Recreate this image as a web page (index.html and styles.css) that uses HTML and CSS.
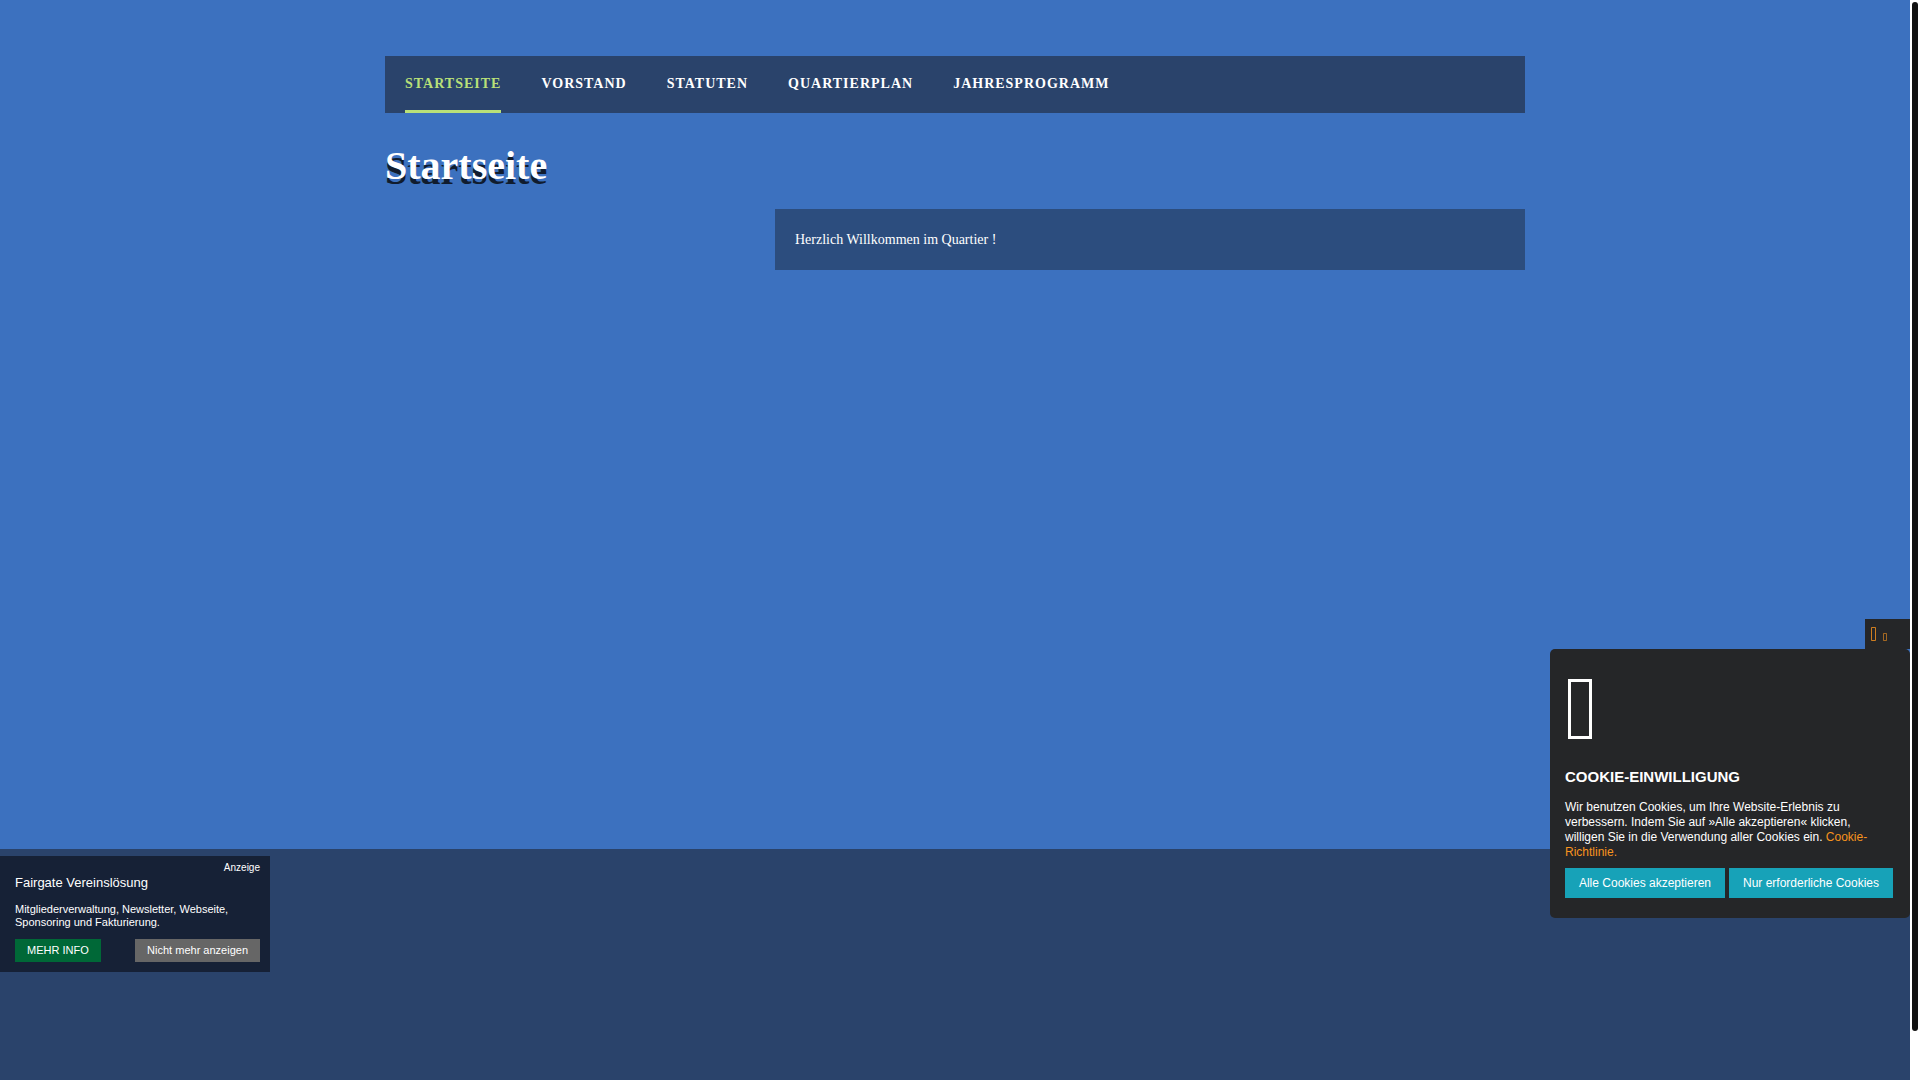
FILE: index.html
```html
<!DOCTYPE html>
<html lang="de">
<head>
<meta charset="utf-8">
<meta name="viewport" content="width=device-width, initial-scale=1">
<title>Startseite</title>
<link rel="stylesheet" href="styles.css">
</head>
<body>
<div class="page">
  <div class="main">
    <div class="container">
      <nav class="nav" aria-label="Hauptnavigation">
        <a class="nav-link active" href="#">STARTSEITE</a>
        <a class="nav-link" href="#">VORSTAND</a>
        <a class="nav-link" href="#">STATUTEN</a>
        <a class="nav-link" href="#">QUARTIERPLAN</a>
        <a class="nav-link" href="#">JAHRESPROGRAMM</a>
      </nav>
      <h1 class="title">Startseite</h1>
      <main class="columns">
        <section class="box"><p>Herzlich Willkommen im Quartier !</p></section>
      </main>
    </div>
  </div>
  <footer class="footer"></footer>
</div>
<div class="track"><div class="thumb"></div></div>

<aside class="ad">
  <p class="ad-label">Anzeige</p>
  <h2 class="ad-title">Fairgate Vereinslösung</h2>
  <p class="ad-text">Mitgliederverwaltung, Newsletter, Webseite, Sponsoring und Fakturierung.</p>
  <div class="ad-actions">
    <button class="ad-button more" type="button">MEHR INFO</button>
    <button class="ad-button" type="button">Nicht mehr anzeigen</button>
  </div>
</aside>

<div class="consent">
  <button class="tab" type="button" aria-label="Cookie-Einstellungen">
    <svg width="17" height="14" viewBox="0 0 17 14" fill="none" stroke="#f7931e"><path stroke-opacity=".8" d="M.5.5h4v13h-4z"/><path stroke-opacity=".6" d="M12.500 6.500h3v7h-3z"/></svg>
  </button>
  <section class="panel" aria-labelledby="consent-title">
    <svg class="panel-icon" width="24" height="60" viewBox="0 0 24 60" fill="none" stroke="#fff" stroke-width="3"><path d="M1.500 1.500h21v57h-21z"/></svg>
    <h2 class="panel-title" id="consent-title">COOKIE-EINWILLIGUNG</h2>
    <p class="panel-text">Wir benutzen Cookies, um Ihre Website-Erlebnis zu verbessern. Indem Sie auf »Alle akzeptieren« klicken, willigen Sie in die Verwendung aller Cookies ein. <a href="#">Cookie-Richtlinie.</a></p>
    <div class="panel-actions">
      <button class="panel-button" type="button">Alle Cookies akzeptieren</button>
      <button class="panel-button" type="button">Nur erforderliche Cookies</button>
    </div>
  </section>
</div>
</body>
</html>
```
FILE: styles.css
```css
* { box-sizing: border-box; }

body {
  margin: 0;
  display: flex;
  min-height: 100vh;
  background: #fff;
  color: #fff;
  font: 14px/20px "Liberation Serif", "Times New Roman", serif;
}

h1, h2, p { margin: 0; }
a { text-decoration: none; }
button { border: 0; margin: 0; color: inherit; font: inherit; cursor: pointer; }

.page { flex: 1; display: flex; flex-direction: column; }
.main { flex: 1; padding: 56px 20px; background: #3c71bf; }
.container { max-width: 1140px; margin: 0 auto; }
.footer { height: 231px; background: #2a436b; }

.nav {
  display: flex;
  flex-wrap: wrap;
  gap: 0 40px;
  padding: 0 20px;
  background: #2a436b;
}
.nav-link {
  padding: 18px 0 16px;
  border-bottom: 3px solid transparent;
  color: #fff;
  font-weight: bold;
  letter-spacing: 1px;
}
.nav-link.active { color: #b9e078; border-color: #b9e078; }

.title {
  margin: 30px 0 20px;
  font-size: 40px;
  line-height: 46px;
  text-shadow: 0 5px 0 #101c2e;
}

.columns { display: grid; grid-template-columns: 360px 1fr; gap: 30px; }
.box { grid-column: 2; padding: 21px 20px 20px; background: #2c4d7e; }

/* Scroll bar */
.track { width: 10px; padding: 2px; height: 100vh; position: sticky; top: 0; }
.thumb { width: 6px; height: calc(100% - 47px); border-radius: 3px; background: #111; }

/* Advertisement */
.ad {
  position: fixed;
  left: 0;
  bottom: 108px;
  width: 270px;
  padding: 5px 10px 10px 15px;
  background: #162136;
  font: 11px/13px "Liberation Sans", Arial, sans-serif;
}
.ad-label { font-size: 10px; text-align: right; }
.ad-title { font-size: 13px; line-height: 18px; font-weight: normal; }
.ad-text { margin: 11px 0 10px; }
.ad-actions { display: flex; justify-content: space-between; }
.ad-button { padding: 5px 12px; background: #666; }
.ad-button.more { background: #006837; }

/* Cookie consent */
.consent {
  position: fixed;
  right: 10px;
  bottom: 162px;
  width: 360px;
  display: flex;
  flex-direction: column;
  align-items: flex-end;
  font: 12px/15px "Liberation Sans", Arial, sans-serif;
}
.tab {
  display: flex;
  width: 45px;
  height: 30px;
  padding: 8px 6px;
  background: #252628;
}
.panel { width: 100%; padding: 30px 15px 20px; border-radius: 5px; background: #252628; }
.panel-icon { display: block; margin: 0 3px; }
.panel-title { margin: 29px 0 14px; font-size: 15px; line-height: 18px; }
.panel-text { margin-bottom: 8px; padding-right: 15px; }
.panel-text a { color: #f7931e; }
.panel-actions { display: grid; grid-template-columns: 160px 164px; gap: 4px; }
.panel-button { padding: 8px 0 7px; background: #17a2b8; white-space: nowrap; }
```
